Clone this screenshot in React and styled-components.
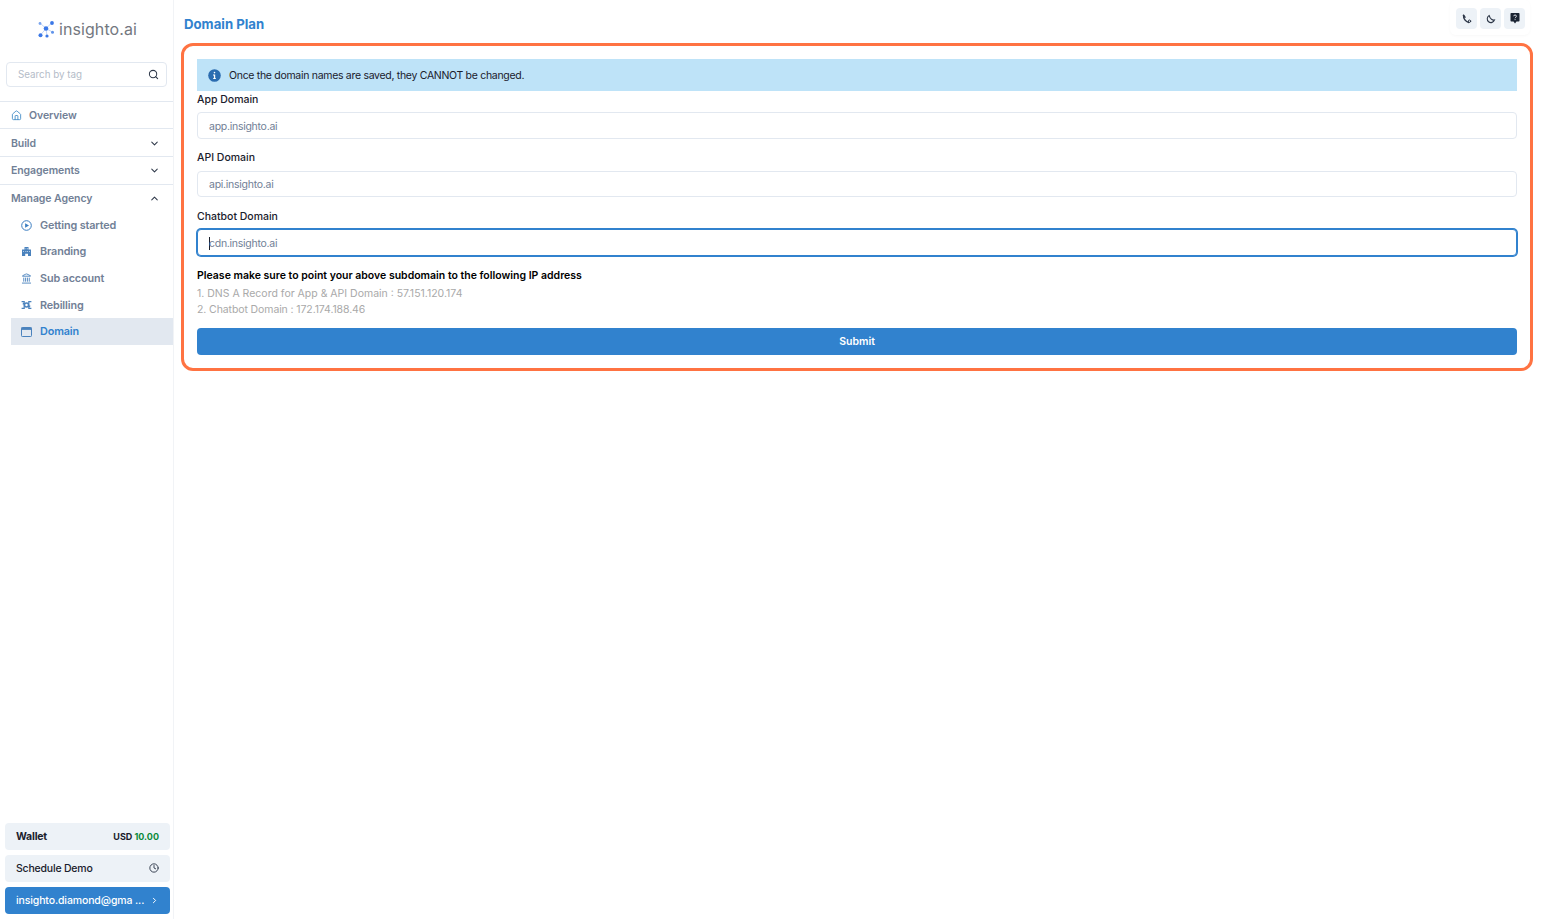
import React from "react";
import styled, { createGlobalStyle } from "styled-components";
import { Search, ChevronDown, ChevronUp, ChevronRight, House, Landmark, Clock } from "lucide-react";

const Global = createGlobalStyle`
  html, body { margin: 0; padding: 0; background: #fff; }
  body { font-family: Inter, "Noto Sans", sans-serif; }
  * { box-sizing: border-box; }
`;
const Page = styled.div`display: flex; width: 1541px; height: 919px; overflow: hidden;`;
const Sidebar = styled.aside`
  width: 174px; flex: none; height: 919px; border-right: 1px solid #f1f3f6;
  display: flex; flex-direction: column;
`;
const Logo = styled.div`
  height: 62px; display: flex; align-items: center; justify-content: center; gap: 4px; padding: 0 0 4px 2px;
  font-size: 16px; color: #74787f; letter-spacing: .1px;
`;
const SearchBox = styled.div`
  margin: 0 6px; height: 25px; border: 1px solid #e2e8f0; border-radius: 4px;
  display: flex; align-items: center; justify-content: space-between; padding: 0 7px 1px 11px;
  font-size: 9.8px; color: #b4bcc8;
`;
const Nav = styled.nav`
  margin-top: 14px; border-top: 1px solid #e2e8f0; display: flex; flex-direction: column;
`;
const NavRow = styled.div`
  height: ${p => p.$h}px; display: flex; align-items: center; justify-content: space-between;
  padding: ${p => p.$pt || 0}px 13px 0 11px; border-bottom: 1px solid #e2e8f0;
  font-size: 10.5px; font-weight: 600; color: #718096; letter-spacing: -.08px;
  &:nth-child(4) { border-bottom: none; }
`;
const NavLabel = styled.span`display: flex; align-items: center; gap: 7px;`;
const SubList = styled.div`display: flex; flex-direction: column; margin-left: 11px;`;
const SubItem = styled.div`
  height: 26.6px; display: flex; align-items: center; gap: 8px; padding-left: 10px;
  font-size: 10.8px; font-weight: 600; letter-spacing: -.12px;
  color: ${p => (p.$active ? "#3182ce" : "#718096")};
  background: ${p => (p.$active ? "#e2e8f0" : "transparent")};
`;
const Footer = styled.div`
  margin-top: auto; padding: 0 3px 5px 5px; display: flex; flex-direction: column; gap: 5px;
`;
const FootBtn = styled.div`
  height: 27px; border-radius: 4px; display: flex; align-items: center; justify-content: space-between;
  padding: 0 11px 1px; font-size: 10.5px; white-space: nowrap;
  font-weight: ${p => (p.$strong ? 700 : 500)};
  letter-spacing: ${p => (p.$primary ? "-.12px" : "-.2px")};
  background: ${p => (p.$primary ? "#3182ce" : "#edf2f7")};
  color: ${p => (p.$primary ? "#fff" : "#1a202c")};
`;
const Amount = styled.span`font-size: 9px; font-weight: 700; color: #1a202c; letter-spacing: 0;`;
const Money = styled.span`color: #0a8a3a;`;
const Main = styled.main`flex: 1; min-width: 0; padding: 0 8px 0 7px; display: flex; flex-direction: column;`;
const TopBar = styled.header`
  height: 43px; display: flex; justify-content: space-between; align-items: flex-start; padding: 0 3px;
`;
const Title = styled.h1`
  margin: 16px 0 0; font-size: 13.2px; line-height: 17px; font-weight: 700; color: #3182ce;
`;
const Tools = styled.div`
  display: flex; gap: 3px; padding: 8px 5px 6px 6px; border-radius: 6px;
  box-shadow: 0 1px 3px rgba(0,0,0,.03);
`;
const ToolBtn = styled.div`
  width: 21px; height: 21px; border-radius: 4px; background: #edf2f7; color: #2d3748;
  display: flex; align-items: center; justify-content: center;
`;
const Panel = styled.section`
  height: 328px; border: 3px solid #ff7342; border-radius: 12px; padding: 13px;
  display: flex; flex-direction: column;
`;
const Alert = styled.div`
  height: 32px; flex: none; background: #bee3f8; display: flex; align-items: center; gap: 8px; padding-left: 11px;
  font-size: 10.5px; letter-spacing: -.3px; color: #1a202c;
`;
const Label = styled.label`
  display: block; font-size: 10.5px; font-weight: 500; line-height: 13px; color: #1a202c;
  margin-top: ${p => p.$top}px; margin-bottom: ${p => p.$bottom}px;
`;
const Field = styled.div`
  height: ${p => p.$h}px; flex: none; border-radius: 4px; padding: ${p => p.$pad}px 0 0 11px; display: flex; align-items: center;
  font-size: 10.5px; letter-spacing: -.27px; color: #718096; background: #fff;
  border: 1px solid ${p => (p.$focus ? "#3182ce" : "#e2e8f0")};
  box-shadow: ${p => (p.$focus ? "0 0 0 1px #3182ce" : "none")};
`;
const Caret = styled.span`display: inline-block; width: 1px; height: 13px; background: #1a202c; margin-right: -1px;`;
const Note = styled.p`margin: 13px 0 0; font-size: 10.5px; line-height: 13px; font-weight: 600; color: #000;`;
const Hint = styled.p`margin: ${p => p.$top}px 0 0; font-size: 10.5px; line-height: 13px; color: #a9a9a9; letter-spacing: ${p => p.$ls}px;`;
const Submit = styled.button`
  margin-top: 12px; height: 27px; flex: none; border: none; border-radius: 4px; background: #3182ce; color: #fff;
  font: 600 10.5px Inter, sans-serif;
`;

const LogoMark = () => (
  <svg width="17" height="17" viewBox="0 0 17 17" fill="#3b78e7">
    <path d="M2 2 L8 7.5 L14 1.5 M8 7.5 L2.5 14 M8 7.5 L9 15 M8 7.5 L14.5 11" stroke="#a9c4f4" strokeWidth=".7" fill="none" />
    <circle cx="2" cy="2.5" r="1.4" fill="#7aa5ee" /><circle cx="14" cy="2" r="1.9" />
    <circle cx="8" cy="7.5" r="2.3" /><circle cx="2.5" cy="14.3" r="2" />
    <circle cx="14.5" cy="11.3" r="1.5" fill="#5f93ea" /><circle cx="9" cy="15" r="1.6" />
  </svg>
);
const PlayIcon = () => (
  <svg width="11" height="11" viewBox="0 0 11 11">
    <circle cx="5.5" cy="5.5" r="4.8" fill="none" stroke="#3a7dc0" strokeWidth="1" />
    <path d="M4.1 3.2 8 5.5 4.1 7.8z" fill="#3a7dc0" />
  </svg>
);
const BrandingIcon = () => (
  <svg width="11" height="11" viewBox="0 0 11 11" fill="#4a82bd">
    <path d="M3.5 1h4v2.6H10V10H7V7.8H4.2V10H1V3.6h2.5z" />
    <path d="M4.5 2.2h.8v1h-.8zM6 2.2h.8v1H6zM2.2 5h.8v1h-.8zM8 5h.8v1H8zM4.5 5h.8v1h-.8zM6 5h.8v1H6z" fill="#cfe0f0" />
  </svg>
);
const RebillIcon = () => (
  <svg width="11" height="10" viewBox="0 0 11 10" fill="none" stroke="#4a82bd" strokeWidth="1.2">
    <path d="M.6 1.6h2.6v6.8H.6M10.4 1.6H7.8v6.8h2.6" />
    <circle cx="5.5" cy="5" r="2" strokeWidth="1.5" />
    <path d="M3.2 3 1.8 4.4M7.8 7l1.4-1.4" />
  </svg>
);
const WindowIcon = () => (
  <svg width="11" height="10" viewBox="0 0 11 10">
    <rect x=".5" y=".5" width="10" height="9" rx=".8" fill="none" stroke="#4a82bd" />
    <rect x=".5" y=".5" width="10" height="2.4" fill="#4a82bd" />
  </svg>
);
const InfoFilled = () => (
  <svg width="13" height="13" viewBox="0 0 13 13">
    <circle cx="6.5" cy="6.5" r="6.3" fill="#2b6cb0" />
    <rect x="5.7" y="2.8" width="1.6" height="1.6" rx=".8" fill="#fff" />
    <path d="M5 5.6h2.2v3.6h.8v.9H5v-.9h.9V6.5H5z" fill="#fff" />
  </svg>
);
const PhoneIcon = () => (
  <svg width="10" height="10" viewBox="0 0 10 10" fill="none" stroke="#2d3748" strokeWidth="1.5" strokeLinecap="round">
    <path d="M1.6 1.4c-.3 3.2 2 6.3 5.2 7" />
    <circle cx="7.5" cy="7.2" r="1.2" strokeWidth="1" />
    <path d="M1.5 1.3 3 3.2" />
  </svg>
);
const MoonIcon = () => (
  <svg width="10" height="10" viewBox="0 0 10 10" fill="none" stroke="#2d3748" strokeWidth="1.1">
    <path d="M3.2 1.6a3.7 3.7 0 1 0 5.3 4.3C6.6 6.6 4.2 5 3.2 1.6z" />
  </svg>
);
const HelpIcon = () => (
  <svg width="10" height="11" viewBox="0 0 10 11" fill="#1a2433">
    <path d="M1.3 0h7.4a.8.8 0 0 1 .8.8v7a.8.8 0 0 1-.8.8H6.5L5 10.5 3.5 8.6H1.3a.8.8 0 0 1-.8-.8v-7a.8.8 0 0 1 .8-.8z" />
    <path d="M3.6 3.2c.1-1.6 2.9-1.6 2.9 0 0 1-1.4 1-1.4 2M5.1 6.2v.9" stroke="#edf2f7" strokeWidth=".9" fill="none" />
  </svg>
);

export default function App() {
  return (
    <Page>
      <Global />
      <Sidebar>
        <Logo><LogoMark />insighto.ai</Logo>
        <SearchBox>Search by tag<Search size={11} color="#2d3748" strokeWidth={2.2} /></SearchBox>
        <Nav>
          <NavRow $h={27}><NavLabel><House size={11} color="#4a90c8" />Overview</NavLabel></NavRow>
          <NavRow $h={28} $pt={1}>Build<ChevronDown size={11} color="#2d3748" strokeWidth={2.2} /></NavRow>
          <NavRow $h={28}>Engagements<ChevronDown size={11} color="#2d3748" strokeWidth={2.2} /></NavRow>
          <NavRow $h={27}>Manage Agency<ChevronUp size={11} color="#2d3748" strokeWidth={2.2} /></NavRow>
        </Nav>
        <SubList>
          <SubItem><PlayIcon />Getting started</SubItem>
          <SubItem><BrandingIcon />Branding</SubItem>
          <SubItem><Landmark size={11} color="#4a82bd" />Sub account</SubItem>
          <SubItem><RebillIcon />Rebilling</SubItem>
          <SubItem $active><WindowIcon />Domain</SubItem>
        </SubList>
        <Footer>
          <FootBtn $strong>Wallet<Amount>USD <Money>10.00</Money></Amount></FootBtn>
          <FootBtn>Schedule Demo<Clock size={10} color="#2d3748" strokeWidth={2.2} /></FootBtn>
          <FootBtn $primary>insighto.diamond@gma ...<ChevronRight size={9} color="#fff" strokeWidth={2.6} /></FootBtn>
        </Footer>
      </Sidebar>
      <Main>
        <TopBar>
          <Title>Domain Plan</Title>
          <Tools>
            <ToolBtn><PhoneIcon /></ToolBtn>
            <ToolBtn><MoonIcon /></ToolBtn>
            <ToolBtn><HelpIcon /></ToolBtn>
          </Tools>
        </TopBar>
        <Panel>
          <Alert><InfoFilled />Once the domain names are saved, they CANNOT be changed.</Alert>
          <Label $top={2} $bottom={6}>App Domain</Label>
          <Field $h={27} $pad={1}>app.insighto.ai</Field>
          <Label $top={12} $bottom={7}>API Domain</Label>
          <Field $h={26} $pad={0}>api.insighto.ai</Field>
          <Label $top={13} $bottom={6}>Chatbot Domain</Label>
          <Field $h={27} $pad={1} $focus><Caret />cdn.insighto.ai</Field>
          <Note>Please make sure to point your above subdomain to the following IP address</Note>
          <Hint $top={5} $ls={0}>1. DNS A Record for App &amp; API Domain : 57.151.120.174</Hint>
          <Hint $top={3} $ls={-0.1}>2. Chatbot Domain : 172.174.188.46</Hint>
          <Submit>Submit</Submit>
        </Panel>
      </Main>
    </Page>
  );
}
